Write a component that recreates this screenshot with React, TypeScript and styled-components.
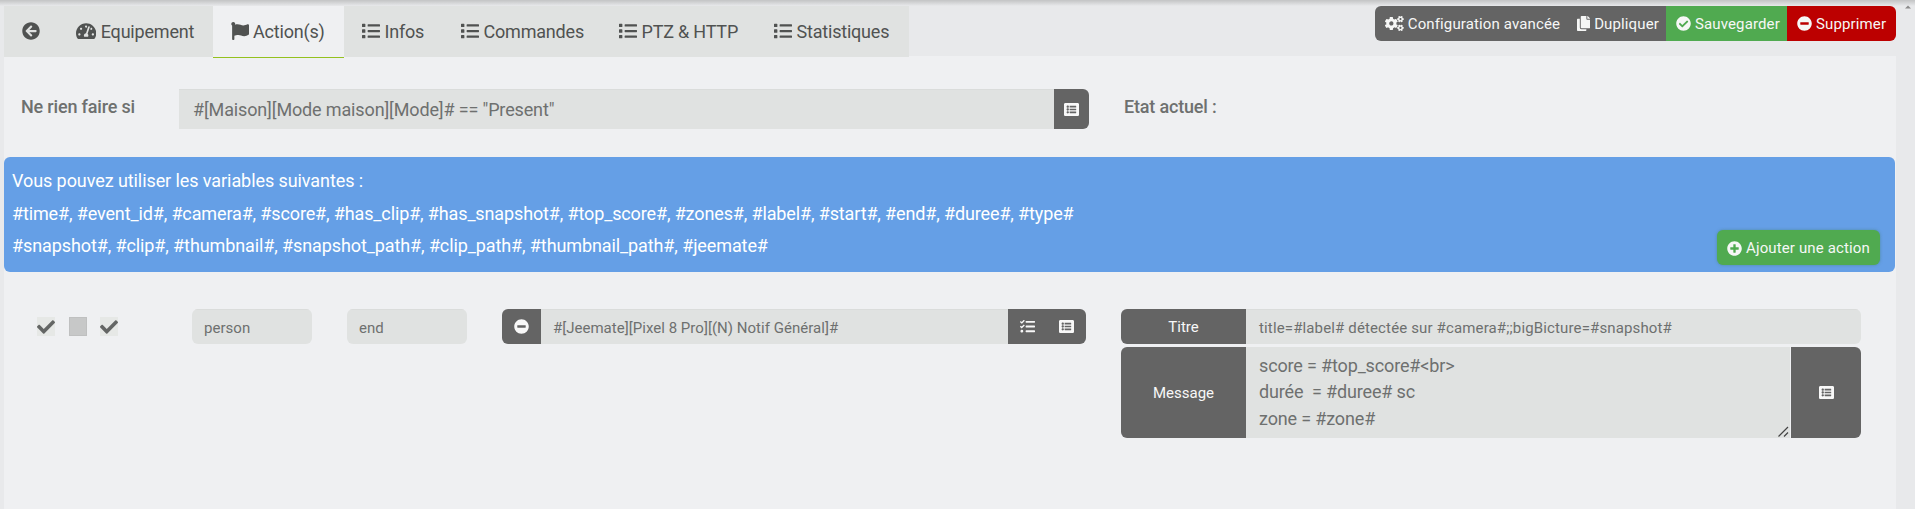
import React from "react";
import styled, { createGlobalStyle, css } from "styled-components";
import {
  FaArrowCircleLeft,
  FaTachometerAlt,
  FaFlag,
  FaList,
  FaCogs,
  FaCopy,
  FaCheckCircle,
  FaMinusCircle,
  FaPlusCircle,
  FaTasks,
  FaListAlt,
  FaCheck,
} from "react-icons/fa";

const GlobalStyle = createGlobalStyle`
  * { box-sizing: border-box; }
  body {
    margin: 0;
    background: #e8e9eb;
    font-family: Roboto, "Liberation Sans", sans-serif;
    font-size: 18px;
    color: #6e706f;
    overflow: hidden;
  }
  svg { display: block; flex: none; height: 1em; width: 1em; }
  svg[viewBox="0 0 640 512"] { width: 1.25em; }
  svg[viewBox="0 0 576 512"] { width: 1.125em; }
  svg[viewBox="0 0 448 512"] { width: 0.875em; }
`;

const Page = styled.div`
  display: flex;
  height: 509px;
  width: 1915px;
  padding: 0 0 0 4px;
  background: linear-gradient(#c3c4c5 0, #cfd0d1 2px, #e8e9eb 6px);
`;

const Main = styled.div`
  width: 1892px;
  display: flex;
  flex-direction: column;
`;

const Gutter = styled.div`
  flex: 1;
  padding: 5px 0 0 9px;
  svg { width: 6px; height: 4px; }
`;

const TopBar = styled.div`
  height: 57px;
  padding-top: 6px;
  display: flex;
  justify-content: space-between;
  align-items: flex-start;
`;

const Tabs = styled.nav`
  display: flex;
  height: 51px;
  background: #e0e2e1;
  color: #505251;
  letter-spacing: -0.2px;
`;

const Tab = styled.div<{ $w: number; $active?: boolean }>`
  width: ${(p) => p.$w}px;
  height: 51px;
  padding: 0 0 1px 18px;
  display: flex;
  align-items: center;
  gap: 4.5px;
  white-space: nowrap;
  ${(p) =>
    p.$active &&
    css`
      height: 52px;
      padding-bottom: 1px;
      gap: 4px;
      background: #eff0f2;
      border-bottom: 1px solid #94c11f;
    `}
`;

const Group = styled.div`
  display: flex;
  height: 35px;
  border-radius: 6px;
  overflow: hidden;
`;

const tones = { grey: "#646464", green: "#50aa50", red: "#bc0000" };

const Button = styled.div<{ $tone: keyof typeof tones; $w: number }>`
  width: ${(p) => p.$w}px;
  height: 35px;
  padding-left: 10px;
  display: flex;
  align-items: center;
  gap: 4px;
  background: ${(p) => tones[p.$tone]};
  color: #f6f7f6;
  font-size: 15px;
  letter-spacing: 0.13px;
  white-space: nowrap;
`;

const Panel = styled.main`
  flex: 1;
  background: #eff0f2;
  margin-top: 1px;
  box-shadow: 0 -1px 0 #eff0f2;
`;

const Header = styled.div`
  position: relative;
  z-index: 1;
  margin-bottom: -1px;
`;

const Condition = styled.div`
  display: flex;
  align-items: center;
  padding: 32px 0 28px 17px;
  height: 100px;
  letter-spacing: -0.18px;
`;

const Label = styled.label<{ $w: number }>`
  width: ${(p) => p.$w}px;
  padding-bottom: 5px;
  font-weight: 500;
  white-space: nowrap;
`;

const InputGroup = styled.div<{ $w: number; $h: number; $mr?: number; $square?: boolean }>`
  display: flex;
  width: ${(p) => p.$w}px;
  height: ${(p) => p.$h}px;
  margin-right: ${(p) => p.$mr ?? 0}px;
  border-radius: ${(p) => (p.$square ? "0 6px 6px 0" : "6px")};
  overflow: hidden;
`;

const Field = styled.div<{ $size?: number; $pad?: number; $ls?: number }>`
  flex: 1;
  display: flex;
  align-items: center;
  padding: ${(p) => (p.$size ? 0 : 2)}px 0 0 ${(p) => p.$pad ?? 12}px;
  background: #e0e2e1;
  border-top: 1px solid #dadcdb;
  font-size: ${(p) => p.$size ?? 15}px;
  letter-spacing: ${(p) => p.$ls ?? 0.03}px;
  white-space: nowrap;
`;

const Addon = styled.div<{ $w: number }>`
  width: ${(p) => p.$w}px;
  display: flex;
  align-items: center;
  justify-content: center;
  background: #646464;
  color: #f8f8f8;
  font-size: 15px;
`;

const Alert = styled.section`
  height: 115px;
  padding: 8px 15px 7px 8px;
  display: flex;
  justify-content: space-between;
  align-items: flex-end;
  border-radius: 6px;
  background: #659fe6;
  color: #fff;
  line-height: 32.5px;
  white-space: nowrap;
  width: 1891px;
`;

const AlertText = styled.div`
  align-self: flex-start;
`;

const Line = styled.div<{ $ls: number }>`
  letter-spacing: ${(p) => p.$ls}px;
`;

const AddButton = styled(Button)`
  padding-top: 2px;
  border-radius: 6px;
  box-shadow: 0 0 3px rgba(60, 120, 90, 0.5);
`;

const ActionRow = styled.div`
  display: flex;
  align-items: flex-start;
  padding: 37px 0 0 33px;
`;

const Checks = styled.div`
  display: flex;
  gap: 13.5px;
  width: 155px;
  padding-top: 8px;
`;

const CheckBox = styled.div<{ $checked?: boolean }>`
  width: 18px;
  height: 19px;
  display: flex;
  align-items: center;
  justify-content: center;
  background: ${(p) => (p.$checked ? "#e6e8e6" : "#c7c8c8")};
  border: ${(p) => (p.$checked ? "0" : "1px solid #bfc0c0")};
  color: #646665;
`;

const Options = styled.div`
  display: flex;
  flex-direction: column;
  gap: 3px;
`;

const TextArea = styled.div`
  position: relative;
  flex: 1;
  margin-right: 1px;
  padding: 6px 0 0 13px;
  background: #e0e2e1;
  line-height: 26.4px;
  letter-spacing: -0.15px;
  white-space: pre;
`;

const Grip = styled.svg`
  position: absolute;
  right: 1px;
  bottom: 1px;
  && { width: 11px; height: 11px; }
`;

const listTabs = [
  { label: "Infos", w: 99 },
  { label: "Commandes", w: 158 },
  { label: "PTZ & HTTP", w: 155 },
  { label: "Statistiques", w: 153 },
];

export default function App() {
  return (
    <>
      <GlobalStyle />
      <Page>
        <Main>
          <Header>
            <TopBar>
              <Tabs>
                <Tab $w={54}><FaArrowCircleLeft /></Tab>
                <Tab $w={155}><FaTachometerAlt />Equipement</Tab>
                <Tab $w={131} $active><FaFlag />Action(s)</Tab>
                {listTabs.map((t) => (
                  <Tab key={t.label} $w={t.w}><FaList />{t.label}</Tab>
                ))}
              </Tabs>
              <Group>
                <Button $tone="grey" $w={192}><FaCogs />Configuration avancée</Button>
                <Button $tone="grey" $w={99}><FaCopy />Dupliquer</Button>
                <Button $tone="green" $w={121}><FaCheckCircle />Sauvegarder</Button>
                <Button $tone="red" $w={109}><FaMinusCircle />Supprimer</Button>
              </Group>
            </TopBar>
          </Header>
          <Panel>
            <Condition>
              <Label $w={158}>Ne rien faire si</Label>
              <InputGroup $w={910} $h={40} $mr={35} $square>
                <Field $size={18} $pad={14} $ls={-0.14}>#[Maison][Mode maison][Mode]# == "Present"</Field>
                <Addon $w={35}><FaListAlt /></Addon>
              </InputGroup>
              <Label $w={120}>Etat actuel :</Label>
            </Condition>
            <Alert>
              <AlertText>
                <Line $ls={-0.08}>Vous pouvez utiliser les variables suivantes :</Line>
                <Line $ls={-0.13}>#time#, #event_id#, #camera#, #score#, #has_clip#, #has_snapshot#, #top_score#, #zones#, #label#, #start#, #end#, #duree#, #type#</Line>
                <Line $ls={-0.1}>#snapshot#, #clip#, #thumbnail#, #snapshot_path#, #clip_path#, #thumbnail_path#, #jeemate#</Line>
              </AlertText>
              <AddButton $tone="green" $w={163}><FaPlusCircle />Ajouter une action</AddButton>
            </Alert>
            <ActionRow>
              <Checks>
                <CheckBox $checked><FaCheck /></CheckBox>
                <CheckBox />
                <CheckBox $checked><FaCheck /></CheckBox>
              </Checks>
              <InputGroup $w={120} $h={35} $mr={35}><Field>person</Field></InputGroup>
              <InputGroup $w={120} $h={35} $mr={35}><Field>end</Field></InputGroup>
              <InputGroup $w={584} $h={35} $mr={35}>
                <Addon $w={39}><FaMinusCircle /></Addon>
                <Field>#[Jeemate][Pixel 8 Pro][(N) Notif Général]#</Field>
                <Addon $w={39}><FaTasks /></Addon>
                <Addon $w={39}><FaListAlt /></Addon>
              </InputGroup>
              <Options>
                <InputGroup $w={740} $h={35}>
                  <Addon $w={125}>Titre</Addon>
                  <Field $pad={13} $ls={0.14}>title=#label# détectée sur #camera#;;bigBicture=#snapshot#</Field>
                </InputGroup>
                <InputGroup $w={740} $h={91}>
                  <Addon $w={125}>Message</Addon>
                  <TextArea>
                    {"score = #top_score#<br>\ndurée  = #duree# sc\nzone = #zone#"}
                    <Grip viewBox="0 0 11 11" fill="none" stroke="#444" strokeWidth="1.2">
                      <path d="M0.5 10.5L10 1M6 10.5L10 6.5" />
                    </Grip>
                  </TextArea>
                  <Addon $w={70}><FaListAlt /></Addon>
                </InputGroup>
              </Options>
            </ActionRow>
          </Panel>
        </Main>
        <Gutter>
          <svg viewBox="0 0 8 4"><path d="M4 0L8 4H0Z" fill="#8a8a8a" /></svg>
        </Gutter>
      </Page>
    </>
  );
}
